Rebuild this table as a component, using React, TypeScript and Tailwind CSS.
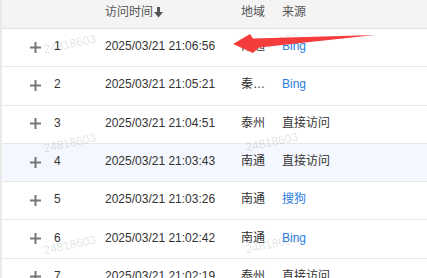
import React from "react";

type Row = { n: number; t: string; r: string; s: string; link: boolean; hl?: boolean };

const rows: Row[] = [
  { n: 1, t: "2025/03/21 21:06:56", r: "南通", s: "Bing", link: true },
  { n: 2, t: "2025/03/21 21:05:21", r: "秦…", s: "Bing", link: true },
  { n: 3, t: "2025/03/21 21:04:51", r: "泰州", s: "直接访问", link: false },
  { n: 4, t: "2025/03/21 21:03:43", r: "南通", s: "直接访问", link: false, hl: true },
  { n: 5, t: "2025/03/21 21:03:26", r: "南通", s: "搜狗", link: true },
  { n: 6, t: "2025/03/21 21:02:42", r: "南通", s: "Bing", link: true },
  { n: 7, t: "2025/03/21 21:02:19", r: "泰州", s: "直接访问", link: false },
];

const Plus = () => (
  <svg width="11" height="11" viewBox="0 0 11 11">
    <rect x="0" y="4.5" width="11" height="2" fill="#777" />
    <rect x="4.5" y="0" width="2" height="11" fill="#777" />
  </svg>
);

const marks = [
  { x: 67, y: 42 },
  { x: 269, y: 41 },
  { x: 67, y: 141 },
  { x: 269, y: 140 },
  { x: 67, y: 243 },
  { x: 269, y: 242 },
];

export default function App() {
  return (
    <div
      className="relative w-[427px] h-[278px] overflow-hidden bg-white border-l-2 border-[#e9e9e9] text-[12px] text-[#333]"
      style={{ fontFamily: '"Liberation Sans", Arial, "Noto Sans CJK SC", sans-serif' }}
    >
      <div className="flex items-center h-[29px] pb-[4px] bg-[#f4f4f4] border-b border-[#e3e3e3] text-[#555]">
        <div className="w-[103px]" />
        <div className="w-[136px] flex items-center">
          <span>访问时间</span>
          <svg width="9" height="11" viewBox="0 0 9 11" className="ml-[1px] mt-[1px]">
            <rect x="3" y="0" width="3" height="6" fill="#555" />
            <polygon points="0,5 9,5 4.5,10.5" fill="#555" />
          </svg>
        </div>
        <div className="w-[41px]">地域</div>
        <div>来源</div>
      </div>
      {rows.map((r) => (
        <div
          key={r.n}
          className={`flex items-center h-[38.3px] pb-[3px] border-b border-[#e8e8e8] ${r.hl ? "bg-[#f4f7fd]" : "bg-white"}`}
        >
          <div className="w-[28px]" />
          <div className="w-[24px] flex items-center pt-[2px]">
            <Plus />
          </div>
          <div className="w-[51px]">{r.n}</div>
          <div className="w-[136px]">{r.t}</div>
          <div className="w-[41px]">{r.r}</div>
          <div className={r.link ? "text-[#2b7de0]" : ""}>{r.s}</div>
        </div>
      ))}
      {marks.map((m, i) => (
        <div
          key={i}
          className="absolute text-[12px] text-black/[0.13] whitespace-nowrap pointer-events-none"
          style={{ left: m.x - 26, top: m.y - 7, transform: "rotate(-12deg)" }}
        >
          24818603
        </div>
      ))}
      <svg className="absolute left-0 top-0 pointer-events-none" width="427" height="278">
        <polygon
          points="231,44 248,34 251,38.5 373,35 257,47.5 251,53"
          fill="#f43c3c"
        />
      </svg>
    </div>
  );
}
